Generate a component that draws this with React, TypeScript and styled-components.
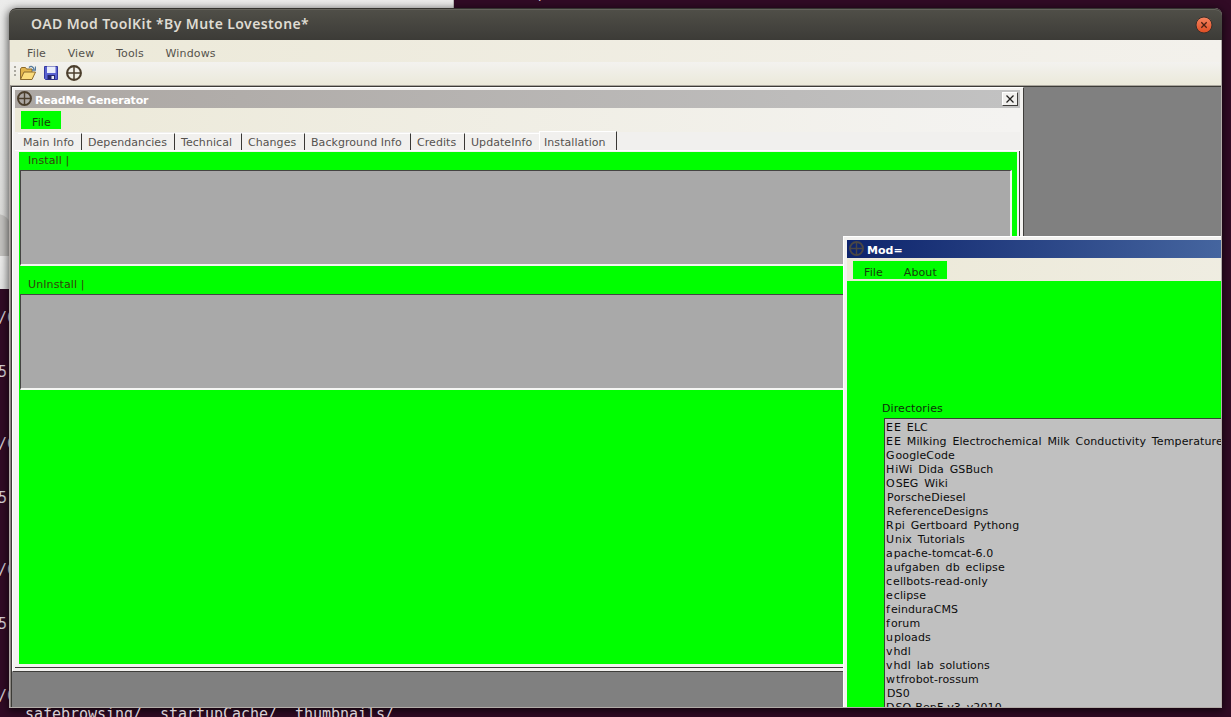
import React from "react";
import styled, { createGlobalStyle, css } from "styled-components";

const GlobalStyle = createGlobalStyle`
  * { box-sizing: border-box; }
  body { margin: 0; overflow: hidden; font-family: "DejaVu Sans", Verdana, sans-serif; font-size: 11px; }
`;

const LIME = "#00ff00";

const Desktop = styled.div`
  position: relative;
  width: 1231px;
  height: 717px;
  overflow: hidden;
  background: #310b25;
`;

const BackWindow = styled.div`
  position: absolute;
  left: 0;
  top: 0;
  width: 454px;
  height: 289px;
  background: linear-gradient(#ececeb, #dededc 216px, #d6d5d3 256px, #eeeeed 256px, #e6e6e5);
  border-right: 1px solid #bdbcba;
`;

const BackTab = styled.div`
  position: absolute;
  left: -14px;
  top: 214px;
  width: 24px;
  height: 42px;
  background: #c4c3c0;
  border-radius: 0 12px 0 0;
`;

const TerminalText = styled.div<{ $x: number; $y: number }>`
  position: absolute;
  left: ${(p) => p.$x}px;
  top: ${(p) => p.$y}px;
  color: #d8d0d4;
  font: 15px/18px "DejaVu Sans Mono", monospace;
  letter-spacing: -0.03px;
  white-space: pre;
`;

const MainWindow = styled.div`
  position: absolute;
  left: 9px;
  top: 8px;
  width: 1213px;
  height: 700px;
  display: flex;
  flex-direction: column;
  overflow: hidden;
  border-radius: 7px 7px 0 0;
  background: #b2aca8;
`;

const MainShadow = styled.div`
  position: absolute;
  left: 9px;
  top: 8px;
  width: 1213px;
  height: 700px;
  border-radius: 7px 7px 0 0;
  box-shadow: 0 2px 9px 1px rgba(0, 0, 0, 0.65);
`;

const MainTitle = styled.header`
  flex: 0 0 32px;
  display: flex;
  align-items: center;
  justify-content: space-between;
  padding: 0 9px 0 22px;
  border-top: 1px solid #33322e;
  border-radius: 7px 7px 0 0;
  box-shadow: inset 0 1px #66655e;
  background: linear-gradient(#504f48, #3c3b37);
  color: #dfdbd2;
  font: 600 14px/29px "Noto Sans", sans-serif;
  letter-spacing: 0.4px;
`;

const TitleCaption = styled.span`
  padding-bottom: 2px;
`;

const RoundClose = styled.svg`
  display: block;
  width: 18px;
  height: 18px;
`;

const Body = styled.div`
  flex: 1;
  min-height: 0;
  display: flex;
  flex-direction: column;
  margin: 0 1px 1px;
`;

const MenuBar = styled.nav`
  flex: none;
  height: 22px;
  display: flex;
  gap: 21.6px;
  padding: 4px 17px 0;
  line-height: 19px;
  letter-spacing: 0.16px;
  color: #55524c;
  background: linear-gradient(90deg, #ece9d8, #f3f1ec);
`;

const Toolbar = styled.div`
  flex: none;
  height: 23px;
  display: flex;
  align-items: flex-start;
  padding: 3px 0 0 3px;
  background: linear-gradient(#f3f2ef, #ebe9da);
`;

const Grip = styled.svg`
  width: 7px;
  height: 16px;
`;

const ToolIcon = styled.svg`
  width: 16px;
  height: 16px;
  margin-right: 7px;
`;

const MdiArea = styled.main`
  position: relative;
  flex: 1;
  min-height: 0;
  overflow: hidden;
  border-top: 1px solid #aaa69e;
  border-left: 1px solid #8a8680;
  background: #808080;
  box-shadow: inset 1px 1px #3c3b37;
`;

const ChildWindow = styled.section<{ $x: number; $y: number; $w: number; $h: number }>`
  position: absolute;
  left: ${(p) => p.$x}px;
  top: ${(p) => p.$y}px;
  width: ${(p) => p.$w}px;
  height: ${(p) => p.$h}px;
  display: flex;
  flex-direction: column;
  background: #f3f2f0;
  border-style: solid;
  border-color: #fff #3e3d3a #3e3d3a #fff;
  border-width: 1px;
`;

const ChildContent = styled.div<{ $top: number; $side: number }>`
  flex: 1;
  min-height: 0;
  display: flex;
  flex-direction: column;
  padding: ${(p) => p.$top}px 3px 0 ${(p) => p.$side}px;
`;

const ChildTitle = styled.header<{ $active?: boolean }>`
  flex: none;
  height: 18px;
  display: flex;
  align-items: center;
  padding: 0 2px;
  color: #fff;
  font-weight: bold;
  background: ${(p) =>
    p.$active ? "linear-gradient(90deg, #0e246c, #45659f 374px)" : "linear-gradient(90deg, #aca7a3, #c2c2c2)"};
`;

const TitleText = styled.span<{ $spacing?: number }>`
  flex: 1;
  margin-left: 3px;
  padding-top: 3px;
  line-height: 15px;
  letter-spacing: ${(p) => p.$spacing ?? 0}px;
`;

const SquareClose = styled.div`
  width: 16px;
  height: 14px;
  display: flex;
  align-items: center;
  justify-content: center;
  background: #f1f0ee;
  border: 1px solid;
  border-color: #fff #3e3d3a #3e3d3a #fff;
`;

const ChildMenu = styled.nav<{ $height: number }>`
  flex: none;
  height: ${(p) => p.$height}px;
  padding: 3px 6px 0;
  background: linear-gradient(90deg, #ece9d8, #f4f3f1 1000px);
`;

const LimeStrip = styled.div<{ $width: number }>`
  width: ${(p) => p.$width}px;
  height: 18px;
  display: flex;
  gap: 21px;
  padding: 3px 0 0 11px;
  line-height: 18px;
  letter-spacing: 0.1px;
  color: #173d0b;
  background: ${LIME};
`;

const Tabs = styled.div`
  flex: none;
  height: 19px;
  display: flex;
  align-items: flex-end;
  padding-left: 3px;
  background: #f1f0ee;
  border-bottom: 1px solid #fff;
`;

const Tab = styled.div<{ $w: number; $pad: number; $active?: boolean; $plain?: boolean }>`
  width: ${(p) => p.$w}px;
  height: ${(p) => (p.$active ? 19 : 17)}px;
  padding-left: ${(p) => p.$pad}px;
  line-height: ${(p) => (p.$active ? 21 : 17)}px;
  letter-spacing: 0.06px;
  white-space: nowrap;
  color: #55524e;
  border-top: 1px solid #fff;
  ${(p) =>
    !p.$plain &&
    css`
      border-right: 1px solid #393835;
    `}
  ${(p) =>
    p.$active &&
    css`
      border-left: 1px solid #fff;
    `}
`;

const TabPage = styled.div`
  flex: 1;
  min-height: 0;
  margin: 0 0 3px;
  border: solid #3e3d3a;
  border-width: 0 1px 1px 0;
  display: flex;
  padding: 1px 2px 3px 4px;
`;

const LimePage = styled.div`
  flex: 1;
  background: ${LIME};
`;

const FieldLabel = styled.div<{ $gap: number }>`
  height: ${(p) => p.$gap}px;
  padding: ${(p) => p.$gap - 18}px 0 0 9px;
  line-height: 17px;
  letter-spacing: 0.1px;
  color: #34420d;
`;

const TextField = styled.div`
  width: 992px;
  height: 96px;
  margin-left: 1px;
  background: #a9a9a9;
  border: solid;
  border-width: 1px 2px 2px 1px;
  border-color: #454443 #f5f5f3 #f5f5f3 #454443;
`;

const ModPage = styled.div`
  flex: 1;
  min-height: 0;
  padding: 120px 0 0 35px;
  background: ${LIME};
  color: #0d300a;
  line-height: 16px;
  letter-spacing: 0.1px;
`;

const DirectoryList = styled.div`
  height: 400px;
  margin: 1px 0 0 2px;
  padding-top: 2px;
  background: #c0c0c0;
  border: solid #35442f;
  border-width: 1px 0 0 1px;
  color: #0c0c0c;
`;

const Directory = styled.div<{ $indent?: boolean }>`
  height: 14px;
  padding-left: ${(p) => (p.$indent ? 2 : 1)}px;
  line-height: 14px;
  white-space: pre;
  word-spacing: 2.2px;
  letter-spacing: 0.11px;
  &::first-letter {
    letter-spacing: ${(p) => (p.$indent ? 0.1 : 1)}px;
  }
`;

const TitleIcon = styled.svg`
  width: 15px;
  height: 15px;
  margin-top: -1px;
`;

function Crosshair({ color = "#4b3e2c" }: { color?: string }) {
  return (
    <g fill="none" stroke={color}>
      <circle cx="8" cy="8" r="6.9" strokeWidth="2.1" />
      <path d="M8 1v14M1 8h14" strokeWidth="1.5" />
    </g>
  );
}

const terminalRows: [string, number][] = [
  ["/C", 309], ["5:", 363], ["/C", 435], ["5:", 489], ["/C", 561], ["5:", 615], ["/C", 687],
];

const tabs = [
  { label: "Main Info", w: 64, pad: 5 },
  { label: "Dependancies", w: 93, pad: 6 },
  { label: "Technical", w: 67, pad: 6 },
  { label: "Changes", w: 63, pad: 6 },
  { label: "Background Info", w: 106, pad: 6 },
  { label: "Credits", w: 54, pad: 6 },
  { label: "UpdateInfo", w: 74, pad: 6, plain: true },
  { label: "Installation", w: 78, pad: 4, active: true },
];

const directories = [
  "EE ELC", "EE Milking Electrochemical Milk Conductivity Temperature", "GoogleCode",
  "HiWi Dida GSBuch", "OSEG Wiki", "PorscheDiesel", "ReferenceDesigns", "Rpi Gertboard Pythong",
  "Unix Tutorials", "apache-tomcat-6.0", "aufgaben db eclipse", "cellbots-read-only", "eclipse",
  "feinduraCMS", "forum", "uploads", "vhdl", "vhdl lab solutions", "wtfrobot-rossum", "DS0",
  "DSO-BenF-v3 v2010",
];
const indented = new Set(["PorscheDiesel", "ReferenceDesigns", "DS0"]);

function ReadMeWindow() {
  return (
    <ChildWindow $x={1} $y={1} $w={1012} $h={585}>
      <ChildContent $top={2} $side={2}>
        <ChildTitle>
          <TitleIcon viewBox="0 0 16 16"><Crosshair /></TitleIcon>
          <TitleText $spacing={-0.19}>ReadMe Generator</TitleText>
          <SquareClose>
            <svg width="8" height="8" viewBox="0 0 8 8">
              <path d="M.5.5l7 7M7.500.5l-7 7" stroke="#22211f" strokeWidth="1.300" />
            </svg>
          </SquareClose>
        </ChildTitle>
        <ChildMenu $height={24}><LimeStrip $width={40}>File</LimeStrip></ChildMenu>
        <Tabs>
          {tabs.map((t) => (
            <Tab key={t.label} $w={t.w} $pad={t.pad} $active={t.active} $plain={t.plain}>{t.label}</Tab>
          ))}
        </Tabs>
        <TabPage>
          <LimePage>
            <FieldLabel $gap={18}>Install |</FieldLabel>
            <TextField />
            <FieldLabel $gap={28}>UnInstall |</FieldLabel>
            <TextField />
          </LimePage>
        </TabPage>
      </ChildContent>
    </ChildWindow>
  );
}

function ModWindow() {
  return (
    <ChildWindow $x={832} $y={150} $w={420} $h={520}>
      <ChildContent $top={3} $side={3}>
        <ChildTitle $active>
          <TitleIcon viewBox="0 0 16 16"><Crosshair color="#4a4644" /></TitleIcon>
          <TitleText>Mod=</TitleText>
        </ChildTitle>
        <ChildMenu $height={23}><LimeStrip $width={94}><span>File</span><span>About</span></LimeStrip></ChildMenu>
        <ModPage>
          Directories
          <DirectoryList>
            {directories.map((name) => (
              <Directory key={name} $indent={indented.has(name)}>{name}</Directory>
            ))}
          </DirectoryList>
        </ModPage>
      </ChildContent>
    </ChildWindow>
  );
}

export default function App() {
  return (
    <Desktop>
      <GlobalStyle />
      <BackWindow><BackTab /></BackWindow>
      {terminalRows.map(([text, y]) => (
        <TerminalText key={y} $x={-2} $y={y}>{text}</TerminalText>
      ))}
      <TerminalText $x={536} $y={-15}>,</TerminalText>
      <MainShadow />
      <TerminalText $x={25} $y={705}>{"safebrowsing/  startupCache/  thumbnails/"}</TerminalText>
      <MainWindow>
        <MainTitle>
          <TitleCaption>OAD Mod ToolKit *By Mute Lovestone*</TitleCaption>
          <RoundClose viewBox="0 0 18 18">
            <defs>
              <linearGradient id="close" x2="0" y2="1">
                <stop stopColor="#f68560" /><stop offset="1" stopColor="#df4d22" />
              </linearGradient>
            </defs>
            <circle cx="9" cy="9" r="8" fill="url(#close)" stroke="#3a2f2a" />
            <path d="M6.300 6.300l5.400 5.400M11.700 6.300l-5.400 5.400" stroke="#4a2013" strokeWidth="1.300" />
          </RoundClose>
        </MainTitle>
        <Body>
          <MenuBar><span>File</span><span>View</span><span>Tools</span><span>Windows</span></MenuBar>
          <Toolbar>
            <Grip viewBox="0 0 7 16"><path d="M1 1h2v2h-2zM1 5h2v2h-2zM1 9h2v2h-2z" fill="#aaa89f" /></Grip>
            <ToolIcon viewBox="0 0 16 16">
              <path d="M.5 14.500V4l1-1.500h4l1 1.500h5.500v3" fill="#e3b64d" stroke="#8c6a2d" />
              <path d="M.5 14.500L4 7h11.500L12 14.500z" fill="#fbdc7c" stroke="#8c6a2d" />
              <path d="M9 2.500c2-2 4-1 5 1.500M15.500 1.500v3.500h-3.500" fill="none" stroke="#557a9c" strokeWidth="1.300" />
            </ToolIcon>
            <ToolIcon viewBox="0 0 16 16">
              <path d="M1.500 1.500h13v13h-12l-1-1z" fill="#5a62d0" stroke="#3438a0" />
              <path d="M4 1.500h8.500V8H4z" fill="#e9edfa" />
              <path d="M4.500 10h7.500v4.500H4.500z" fill="#25286f" />
              <path d="M8.500 11h2.500v3H8.500z" fill="#e8e8f2" />
            </ToolIcon>
            <ToolIcon viewBox="0 0 16 16"><Crosshair /></ToolIcon>
          </Toolbar>
          <MdiArea>
            <ReadMeWindow />
            <ModWindow />
          </MdiArea>
        </Body>
      </MainWindow>
    </Desktop>
  );
}
